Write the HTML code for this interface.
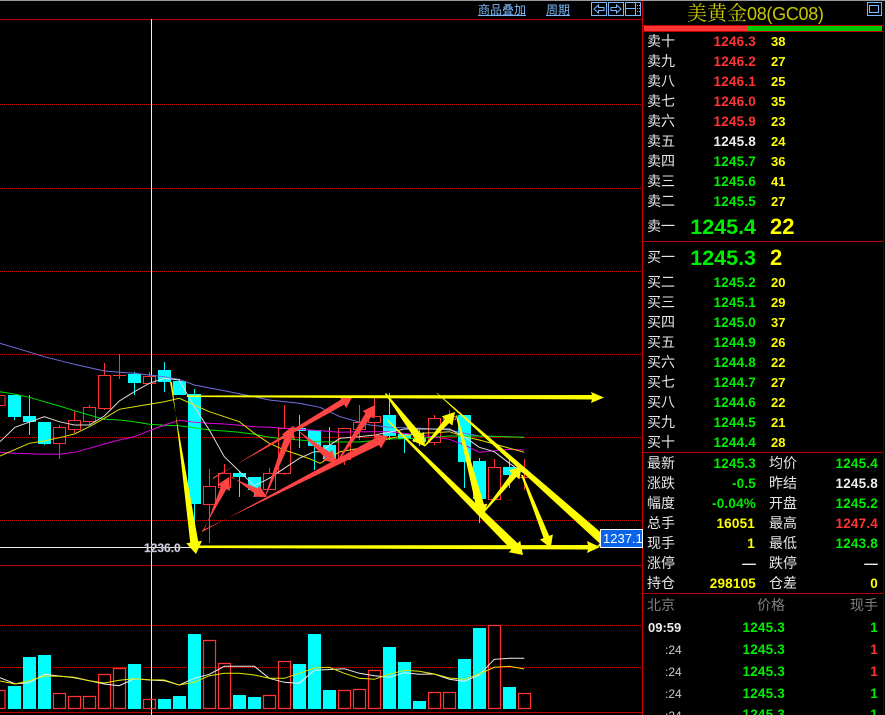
<!DOCTYPE html>
<html><head><meta charset="utf-8"><style>
html,body{margin:0;padding:0;background:#000;width:885px;height:715px;overflow:hidden}
svg{display:block}
text{font-family:"Liberation Sans","WenQuanYi Zen Hei",sans-serif}
.l{font-family:"WenQuanYi Zen Hei","Noto Sans CJK SC",sans-serif;font-size:14px;fill:#e6e6e6}
.n{font-size:13.5px;font-weight:bold;text-anchor:end;letter-spacing:.2px}
.q{font-size:13px;font-weight:bold;fill:#ff0}
.g{fill:#0e0}.r{fill:#f33}.w{fill:#eee}.y{fill:#ff0}
.b{font-size:22px;font-weight:bold}
</style></head><body>
<svg width="885" height="715" viewBox="0 0 885 715" xmlns="http://www.w3.org/2000/svg">
<rect width="885" height="715" fill="#000"/>
<path d="M0 .5H885" stroke="#999" stroke-width="1"/>
<g stroke="#c00" stroke-dasharray="1 1" fill="none">
<path d="M0 104.5H642M0 188.5H642M0 271.5H642M0 354.5H642M0 437.5H642M0 520.5H642M0 625.5H642M0 667.5H642"/>
</g>
<g stroke="#b00" fill="none">
<path d="M0 19.5H642M0 565.5H642M0 712.5H642M643 241.5H883M643 452.5H883M643 593.5H883"/>
<path d="M642.5 1V715" stroke="#c00"/>
<path d="M883.5 1V715" stroke="#400"/>
</g>
<path d="M151.5 19V715" stroke="#eee"/>
<path d="M0 547.5H192" stroke="#eee"/>

<!-- candles -->
<path fill="none" stroke="#f33" d="M-7 395.5H5V405.5H-7ZM53.5 427.5H65.5V443.5H53.5ZM59.5 425V427M59.5 444V459M68.5 420.5H80.5V429.5H68.5ZM74.5 411V420M74.5 430V433M83.5 407.5H95.5V421.5H83.5ZM89.5 405V407M89.5 422V425M98.5 375.5H110.5V408.5H98.5ZM104.5 363V375M104.5 409V410M113 375.5H126M119.5 354V379M143.5 376.5H155.5V383.5H143.5ZM149.5 372V376M203.5 486.5H215.5V504.5H203.5ZM209.5 469V486M209.5 505V543M218.5 473.5H230.5V487.5H218.5ZM224.5 464V473M263.5 473.5H275.5V489.5H263.5ZM269.5 468V473M278.5 428.5H290.5V473.5H278.5ZM284.5 405V428M284.5 474V475M338.5 428.5H350.5V459.5H338.5ZM344.5 459V465M353.5 422.5H365.5V429.5H353.5ZM359.5 405V422M359.5 430V440M368.5 416.5H380.5V422.5H368.5ZM374.5 398V416M374.5 423V440M428.5 418.5H440.5V442.5H428.5ZM434.5 415V418M434.5 443V445M443.5 416.5H455.5V419.5H443.5ZM449.5 410V416M449.5 420V422M488.5 467.5H500.5V499.5H488.5ZM494.5 459V467M518 477.5H530M524.5 459V490"/>
<path fill="#0ff" d="M8 395h13v22H8zM23 416h13v6H23zM38 422h13v22H38zM128 374h13v9h-13zM158 370h13v12h-13zM173 381h13v14h-13zM188 394h13v110h-13zM233 473h13v4h-13zM248 477h13v13h-13zM293 428h13v3h-13zM308 430h13v16h-13zM323 445h13v14h-13zM383 415h13v21h-13zM398 434h13v5h-13zM413 438h13v4h-13zM458 415h13v47h-13zM473 461h13v38h-13zM503 467h13v8h-13z"/>
<path fill="none" stroke="#0ff" d="M14.5 417V420M29.5 395V416M29.5 422V435M44.5 444V445M134.5 372V374M134.5 383V395M164.5 362V370M164.5 382V392M179.5 379V381M194.5 389V394M194.5 504V545M239.5 471V473M239.5 477V497M254.5 490V497M299.5 415V428M299.5 431V448M314.5 446V470M329.5 427V445M389.5 393V415M389.5 436V440M404.5 439V453M419.5 430V438M419.5 442V446M464.5 462V488M479.5 458V461M479.5 499V523M509.5 458V467M509.5 475V488"/>

<!-- MAs -->
<g fill="none" stroke-width="1">
<polyline stroke="#7070e0" points="0,343.3 15,347.7 44.3,356.7 74.3,364.3 104.3,371 134.3,373.3 164.3,376.7 179.3,379.3 194.3,385 224.3,390.7 254.3,396.7 269.3,400 299.3,403.3 320,407.3 340,416.7 370,425 389.3,427.3 419.3,428.3 449.3,430 464.3,433.3 479.3,436 509.3,436.7 524.3,437.3"/>
<polyline stroke="#00e000" points="0,391.7 15,394.3 29.3,397.3 44.3,401.7 59.3,406 74.3,410.7 89.3,415 104.3,419.3 119.3,420 134.3,421.7 149.3,424.3 164.3,425.3 179.3,425.7 194.3,427.7 209.3,430 224.3,431 239.3,432.3 254.3,434.3 269.3,437.3 284.3,438.7 299.3,440 320,441.7 340,442 359.3,442 389.3,439 419.3,438.3 449.3,436 479.3,436 524.3,437.3"/>
<polyline stroke="#e000e0" points="0,452.3 15,453.3 44.3,454.3 59.3,454.3 74.3,452.3 89.3,448.3 104.3,444 119.3,440 134.3,436.7 149.3,430.7 164.3,425 179.3,420.3 194.3,422.3 209.3,423.3 224.3,424 239.3,425.3 254.3,426.7 269.3,427.3 284.3,428.3 299.3,429.3 320,430.7 340,432.3 359.3,431.7 389.3,431.7 419.3,435 449.3,439.3 464.3,445 479.3,452.3 494.3,450.7 509.3,449.3 524.3,450"/>
<polyline stroke="#e0e000" points="0,456 29.3,443.3 44.3,441 59.3,437.7 74.3,434 89.3,426.7 104.3,418.3 119.3,409.3 134.3,406.7 149.3,404.3 164.3,401.7 179.3,398.3 194.3,405 209.3,411.7 224.3,416.7 239.3,421.7 254.3,433.3 269.3,443.3 284.3,450 299.3,455 314.3,460.7 320,463.3 340,451.7 359.3,448.3 389.3,438.3 419.3,433.3 434.3,432.7 449.3,431.7 464.3,436.7 479.3,440 494.3,444 524.3,452.3"/>
<polyline stroke="#ddd" points="0,441.7 15,427.3 44.3,416.7 59.3,421.7 74.3,425 89.3,425 104.3,416 119.3,401 134.3,391.7 149.3,383.3 164.3,378.3 179.3,380 194.3,406.7 209.3,430 224.3,456.7 254.3,485.7 269.3,478.3 284.3,468.3 299.3,458.3 314.3,451.7 320,451.7 340,438.3 359.3,436.7 374.3,435 389.3,432.3 404.3,429 419.3,429 449.3,429 464.3,436.7 479.3,447.3 494.3,451.7 509.3,463.3 524.3,473.3"/>
</g>

<!-- red arrows -->
<g fill="#f44">
<polygon points="202,530.5 379.1,445 380.9,448.6 388,436 373.7,434.4 375.5,438 202,532"/>
<polygon points="213,477.5 344.2,404.6 346.2,408 353,396 339.2,396 341.2,399.4 213,479"/>
<polygon points="203,530 226.4,489.1 230,490.9 229,477 217.4,484.7 221,486.5 204,531"/>
<polygon points="231.7,476.5 254.8,493.6 253,496.7 266.7,497 259.6,485.4 257.8,488.4 232,478"/>
<polygon points="266,496 291.7,438.3 294.9,439.5 292.7,426 281.9,434.5 285.1,435.7 265,496"/>
<polygon points="293,425.5 325.2,457.7 323,460.4 336.7,463 332,449.6 329.8,452.3 293,427"/>
<polygon points="337,463 371.3,416.9 374.3,418.9 375,405 362.5,411.1 365.5,413.1 336,463"/>
</g>
<!-- yellow arrows -->
<g fill="#ff0">
<polygon points="187,395.5 592,395 591,392 604,397.5 591,403 592,399.5 187,397"/>
<polygon points="195,545.5 588,545 587,541 600,547 587,553 588,549.5 195,548"/>
<polygon points="170,382 198.2,541.4 202,540.8 196,554 186.3,543.2 190.2,542.6 172,382"/>
<polygon points="386,393 421.2,434 424,432 425,446.5 412,440.5 414.8,438.6 385,394"/>
<polygon points="425,446.5 449.3,423 452.3,425.6 455,412 441.8,416.4 444.8,419 424,446"/>
<polygon points="457,415 484,504.4 487.3,503.6 483,517 472.7,507.2 476,506.4 456,416"/>
<polygon points="388,420 517.7,543.3 520.2,540.8 523,555 508.8,552.2 511.3,549.7 387,420.5"/>
<polygon points="481,516 516.3,476.9 519.4,479.4 521.7,466 508.6,470.6 511.7,473.1 480,516"/>
<polygon points="523,475 549.2,535.9 552.9,534.5 550.7,548 539.9,539.5 543.6,538.1 521,475"/>
<polygon points="437,392.7 605.7,536.6 608,534 611.7,548 597.4,546 599.7,543.4 436.5,393"/>
</g>

<!-- labels -->
<text x="144" y="552" font-size="12" font-weight="bold" fill="#dde" stroke="#889" stroke-width=".4">1236.0</text>
<rect x="600.5" y="529.5" width="42" height="18" fill="#0a64e8" stroke="#fff"/>
<text x="603" y="543" font-size="13" fill="#fff">1237.1</text>

<!-- volume -->
<path fill="none" stroke="#f33" stroke-width="1.2" d="M-7 690.5H5V708.5H-7ZM53.5 693.5H65.5V708.5H53.5ZM68.5 696.5H80.5V708.5H68.5ZM83.5 696.5H95.5V708.5H83.5ZM98.5 674.5H110.5V708.5H98.5ZM113.5 668.5H125.5V708.5H113.5ZM143.5 699.5H155.5V708.5H143.5ZM203.5 640.5H215.5V708.5H203.5ZM218.5 663.5H230.5V708.5H218.5ZM263.5 695.5H275.5V708.5H263.5ZM278.5 661.5H290.5V708.5H278.5ZM338.5 690.5H350.5V708.5H338.5ZM353.5 689.5H365.5V708.5H353.5ZM368.5 670.5H380.5V708.5H368.5ZM428.5 692.5H440.5V708.5H428.5ZM443.5 692.5H455.5V708.5H443.5ZM488.5 625.5H500.5V708.5H488.5ZM518.5 693.5H530.5V708.5H518.5Z"/>
<path fill="#0ff" d="M8 686h13v23H8zM23 657h13v52H23zM38 655h13v54H38zM128 664h13v45h-13zM158 699h13v10h-13zM173 696h13v13h-13zM188 634h13v75h-13zM233 695h13v14h-13zM248 697h13v12h-13zM293 664h13v45h-13zM308 634h13v75h-13zM323 690h13v19h-13zM383 647h13v62h-13zM398 662h13v47h-13zM413 701h13v8h-13zM458 659h13v50h-13zM473 628h13v81h-13zM503 687h13v22h-13z"/>
<polyline fill="none" stroke="#eee" points="0,677.7 15,683.7 29.3,682.7 44.3,674.3 59.3,676 74.3,677.7 89.3,680.7 104.3,684 119.3,685.7 134.3,678.7 149.3,680 164.3,680.7 179.3,685 194.3,678.3 209.3,674.3 224.3,666.3 254.3,666.3 269.3,678.3 284.3,682.3 299.3,683.3 314.3,670.3 320,670 344.3,668.7 359.3,673.3 374.3,675.7 389.3,677.3 404.3,672.7 419.3,674.3 434.3,674 449.3,679.3 464.3,681.3 479.3,675 494.3,659.3 509.3,658.3 524.3,658.3"/>
<polyline fill="none" stroke="#e8e800" points="0,681 15,684 29.3,680.7 44.3,676 59.3,676.3 74.3,677.3 89.3,680.7 104.3,683 119.3,680.3 134.3,678.7 149.3,679.7 164.3,680 179.3,685 194.3,682.3 209.3,675.7 224.3,673.3 239.3,673.3 254.3,675 269.3,678.3 284.3,678.3 299.3,673.3 314.3,668 329.3,667.3 344.3,673.3 359.3,678.3 374.3,679.3 389.3,674.3 404.3,670.3 419.3,671.3 434.3,674 449.3,678 464.3,679.3 479.3,674 494.3,667.3 509.3,666.3 524.3,669"/>

<!-- top bar -->
<text x="478" y="14" font-size="12" fill="#7cb8f8" style="font-family:'WenQuanYi Zen Hei','Noto Sans CJK SC',sans-serif">商品叠加</text>
<text x="546" y="14" font-size="12" fill="#7cb8f8" style="font-family:'WenQuanYi Zen Hei','Noto Sans CJK SC',sans-serif">周期</text>
<path d="M478 15.5H526M546 15.5H570" stroke="#7cb8f8"/>
<g fill="none" stroke="#7cb8f8">
<rect x="591.5" y="2.5" width="15" height="13"/><rect x="608.5" y="2.5" width="15" height="13"/><rect x="625.5" y="2.5" width="15" height="13"/>
<path d="M594 9L598.5 5V7.5H604V10.5H598.5V13Z"/>
<path d="M621 9L616.5 5V7.5H611V10.5H616.5V13Z"/>
<path d="M626 8.5H635M635.5 3V15"/>
<path d="M637 5.5H640M637 8.5H640M637 11.5H640" stroke-dasharray="1 1"/>
<rect x="867.5" y="2.5" width="14" height="13"/><rect x="869.5" y="5.5" width="9" height="7"/>
</g>
<text x="687" y="20" fill="#c8c800" style="font-family:'Noto Serif CJK SC','Liberation Serif',serif;font-size:20px">美黄金<tspan style="font-family:'Liberation Sans',sans-serif;font-size:18px" letter-spacing="-.3">08(GC08)</tspan></text>
<rect x="643" y="25" width="240" height="1" fill="#b00"/>
<rect x="643" y="31" width="240" height="1" fill="#b00"/>
<rect x="644" y="26" width="104" height="5" fill="#f33"/>
<rect x="748" y="26" width="134" height="5" fill="#00c800"/>

<!-- order book -->
<g class="l">
<text class="l" x="647" y="46">卖十</text><text class="l" x="647" y="66">卖九</text><text class="l" x="647" y="86">卖八</text><text class="l" x="647" y="106">卖七</text><text class="l" x="647" y="126">卖六</text><text class="l" x="647" y="146">卖五</text><text class="l" x="647" y="166">卖四</text><text class="l" x="647" y="186">卖三</text><text class="l" x="647" y="206">卖二</text><text class="l" x="647" y="231">卖一</text>
<text class="l" x="647" y="262">买一</text><text class="l" x="647" y="287">买二</text><text class="l" x="647" y="307">买三</text><text class="l" x="647" y="327">买四</text><text class="l" x="647" y="347">买五</text><text class="l" x="647" y="367">买六</text><text class="l" x="647" y="387">买七</text><text class="l" x="647" y="407">买八</text><text class="l" x="647" y="427">买九</text><text class="l" x="647" y="447">买十</text>
</g>
<g>
<text class="n r" x="756" y="46">1246.3</text><text class="n r" x="756" y="66">1246.2</text><text class="n r" x="756" y="86">1246.1</text><text class="n r" x="756" y="106">1246.0</text><text class="n r" x="756" y="126">1245.9</text><text class="n w" x="756" y="146">1245.8</text><text class="n g" x="756" y="166">1245.7</text><text class="n g" x="756" y="186">1245.6</text><text class="n g" x="756" y="206">1245.5</text>
<text class="n g" x="756" y="287">1245.2</text><text class="n g" x="756" y="307">1245.1</text><text class="n g" x="756" y="327">1245.0</text><text class="n g" x="756" y="347">1244.9</text><text class="n g" x="756" y="367">1244.8</text><text class="n g" x="756" y="387">1244.7</text><text class="n g" x="756" y="407">1244.6</text><text class="n g" x="756" y="427">1244.5</text><text class="n g" x="756" y="447">1244.4</text>
<text class="q" x="771" y="46">38</text><text class="q" x="771" y="66">27</text><text class="q" x="771" y="86">25</text><text class="q" x="771" y="106">35</text><text class="q" x="771" y="126">23</text><text class="q" x="771" y="146">24</text><text class="q" x="771" y="166">36</text><text class="q" x="771" y="186">41</text><text class="q" x="771" y="206">27</text>
<text class="q" x="771" y="287">20</text><text class="q" x="771" y="307">29</text><text class="q" x="771" y="327">37</text><text class="q" x="771" y="347">26</text><text class="q" x="771" y="367">22</text><text class="q" x="771" y="387">27</text><text class="q" x="771" y="407">22</text><text class="q" x="771" y="427">21</text><text class="q" x="771" y="447">28</text>
<text class="b g" x="756" y="234" text-anchor="end" style="font-size:21.5px">1245.4</text><text class="b y" x="770" y="234">22</text>
<text class="b g" x="756" y="265" text-anchor="end" style="font-size:21.5px">1245.3</text><text class="b y" x="770" y="265">2</text>
</g>

<!-- stats -->
<text class="l" x="647" y="468">最新</text><text class="l" x="647" y="488">涨跌</text><text class="l" x="647" y="508">幅度</text><text class="l" x="647" y="528">总手</text><text class="l" x="647" y="548">现手</text><text class="l" x="647" y="568">涨停</text><text class="l" x="647" y="588">持仓</text>
<text class="l" x="769" y="468">均价</text><text class="l" x="769" y="488">昨结</text><text class="l" x="769" y="508">开盘</text><text class="l" x="769" y="528">最高</text><text class="l" x="769" y="548">最低</text><text class="l" x="769" y="568">跌停</text><text class="l" x="769" y="588">仓差</text>
<text class="n g" x="756" y="468">1245.3</text><text class="n g" x="756" y="488">-0.5</text><text class="n g" x="756" y="508">-0.04%</text><text class="n y" x="755" y="528">16051</text><text class="n y" x="755" y="548">1</text><text class="n w" x="756" y="568">—</text><text class="n y" x="756" y="588">298105</text>
<text class="n g" x="878" y="468">1245.4</text><text class="n w" x="878" y="488">1245.8</text><text class="n g" x="878" y="508">1245.2</text><text class="n r" x="878" y="528">1247.4</text><text class="n g" x="878" y="548">1243.8</text><text class="n w" x="878" y="568">—</text><text class="n y" x="878" y="588">0</text>

<!-- trades -->
<text class="l" x="647" y="610" style="fill:#808080">北京</text><text class="l" x="757" y="610" style="fill:#808080">价格</text><text class="l" x="850" y="610" style="fill:#808080">现手</text>
<text x="648" y="632" font-size="13" font-weight="bold" fill="#eee">09:59</text>
<text x="665" y="654" font-size="12" fill="#ccc">:24</text><text x="665" y="676" font-size="12" fill="#ccc">:24</text><text x="665" y="698" font-size="12" fill="#ccc">:24</text><text x="665" y="720" font-size="12" fill="#ccc">:24</text>
<text class="n g" x="785" y="632">1245.3</text><text class="n g" x="785" y="654">1245.3</text><text class="n g" x="785" y="676">1245.3</text><text class="n g" x="785" y="698">1245.3</text><text class="n g" x="785" y="719">1245.3</text>
<text class="n g" x="878" y="632">1</text><text class="n r" x="878" y="654">1</text><text class="n r" x="878" y="676">1</text><text class="n g" x="878" y="698">1</text><text class="n g" x="878" y="719">1</text>
</svg>
</body></html>
